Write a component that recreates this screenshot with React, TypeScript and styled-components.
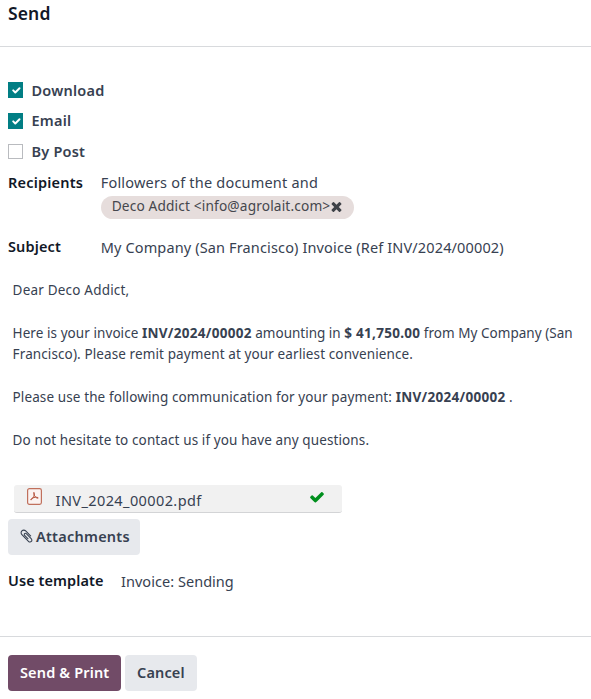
import React from 'react';
import styled, { createGlobalStyle } from 'styled-components';

const GlobalStyle = createGlobalStyle`
  *, *::before, *::after { box-sizing: border-box; }
  body {
    margin: 0;
    background: #fff;
    color: #374151;
    font-family: "Noto Sans", "Open Sans", sans-serif;
    font-size: 14.5px;
    line-height: 28px;
  }
`;

const Dialog = styled.main`
  display: flex;
  flex-direction: column;
  width: 591px;
  height: 699px;
  overflow: hidden;
`;

const Header = styled.header`
  height: 47px;
  padding: 0 8px;
  border-bottom: 1px solid #d8dadd;
`;

const Title = styled.h1`
  margin: 0;
  color: #111827;
  font-size: 17.5px;
  font-weight: 570;
  line-height: 27px;
  letter-spacing: 0.12px;
`;

const Content = styled.section`
  display: flex;
  flex-direction: column;
  height: 589px;
  padding: 27px 8px 0;
`;

const Option = styled.label`
  display: flex;
  align-items: center;
  gap: 8.5px;
  height: 31px;
`;

const OptionText = styled.span<{ $rise: number }>`
  padding-bottom: ${p => p.$rise * 2}px;
  font-weight: 570;
  letter-spacing: 0.22px;
`;

const Box = styled.span<{ $checked: boolean }>`
  display: flex;
  align-items: center;
  justify-content: center;
  width: 15px;
  height: ${p => (p.$checked ? 16 : 15)}px;
  background: ${p => (p.$checked ? '#017e84' : '#fff')};
  border: 1px solid ${p => (p.$checked ? '#017e84' : '#b9bbbf')};
`;

const Field = styled.div<{ $labelWidth: number; $top: number }>`
  display: grid;
  grid-template-columns: ${p => p.$labelWidth}px 1fr;
  margin-top: ${p => p.$top}px;
`;

const FieldLabel = styled.span<{ $spacing: number }>`
  color: #111827;
  font-weight: 600;
  letter-spacing: ${p => p.$spacing}px;
`;

const FieldValue = styled.div<{ $spacing: number; $drop?: number }>`
  height: 28px;
  padding-top: ${p => p.$drop ?? 0}px;
  white-space: nowrap;
  letter-spacing: ${p => p.$spacing}px;
`;

const Chip = styled.span`
  display: flex;
  align-items: center;
  width: 253px;
  height: 23px;
  padding: 0 11px;
  border-radius: 12px;
  background: #e6dddc;
  color: #45474d;
  font-size: 13.7px;
  letter-spacing: 0.15px;
  white-space: nowrap;
`;

const ChipText = styled.span`
  width: 217px;
  height: 23px;
  line-height: 20px;
`;

const Message = styled.div`
  margin: 19.5px 5px 0 4.6px;
  font-size: 13.5px;
  line-height: 21.5px;
  letter-spacing: 0.11px;
  white-space: nowrap;
`;

const Paragraph = styled.p`
  margin: 0 0 21.5px;
`;

const Words = styled.span<{ $spacing: number }>`
  letter-spacing: ${p => p.$spacing}px;
`;

const Strong = styled.strong`
  font-weight: 700;
  letter-spacing: 0.29px;
`;

const FileRow = styled.div`
  display: flex;
  align-items: center;
  width: 328px;
  height: 28px;
  margin: 12px 0 6px 6px;
  padding: 0 17px 0 13px;
  border-bottom: 1px solid #d3d4d6;
  border-radius: 3px;
  background: #f1f1f1;
`;

const FileName = styled.span`
  flex: 1;
  height: 26px;
  margin-left: 13.6px;
  letter-spacing: 0.4px;
`;

const Button = styled.button<{ $primary?: boolean; $width: number; $spacing: number }>`
  display: flex;
  align-items: center;
  flex: none;
  gap: 3px;
  width: ${p => p.$width}px;
  height: 36px;
  padding: 0 0 2px 12px;
  border: 0;
  border-radius: 4px;
  background: ${p => (p.$primary ? '#714b67' : '#e7e9ed')};
  color: ${p => (p.$primary ? '#fff' : '#374151')};
  font: 570 14.5px/34px "Noto Sans", "Open Sans", sans-serif;
  letter-spacing: ${p => p.$spacing}px;
  white-space: nowrap;
`;

const Footer = styled.footer`
  display: flex;
  gap: 4px;
  padding: 18px 8px 0;
  border-top: 1px solid #d8dadd;
`;

const Icon = styled.svg<{ $lift?: number }>`
  flex: none;
  margin-bottom: ${p => p.$lift ?? 0}px;
`;

const CHECK =
  'M1671 566q0 40-28 68l-724 724-136 136q-28 28-68 28t-68-28l-136-136-362-362q-28-28-28-68t28-68l136-136q28-28 68-28t68 28l294 295 656-657q28-28 68-28t68 28l136 136q28 28 28 68z';
const CROSS =
  'M1490 1322q0 40-28 68l-136 136q-28 28-68 28t-68-28l-294-294-294 294q-28 28-68 28t-68-28l-136-136q-28-28-28-68t28-68l294-294-294-294q-28-28-28-68t28-68l136-136q28-28 68-28t68 28l294 294 294-294q28-28 68-28t68 28l136 136q28 28 28 68t-28 68l-294 294 294 294q28 28 28 68z';
const CLIP =
  'M1596 1385q0 117-79 196t-196 79q-135 0-235-100l-777-776q-113-115-113-271 0-159 110-270t269-111q158 0 273 113l605 606q10 10 10 22 0 16-30.5 46.5t-46.5 30.5q-13 0-23-10l-606-607q-79-77-181-77-106 0-179 75t-73 181q0 105 76 181l776 777q63 63 145 63 64 0 106-42t42-106q0-82-63-145l-581-581q-26-24-60-24-29 0-48 19t-19 48q0 32 25 59l410 410q10 10 10 22 0 16-31 47t-47 31q-12 0-22-10l-410-410q-63-61-63-149 0-82 57-139t139-57q88 0 149 63l581 581q100 98 100 235z';

const OPTIONS = [
  { label: 'Download', checked: true, rise: 0 },
  { label: 'Email', checked: true, rise: 1 },
  { label: 'By Post', checked: false, rise: 1 },
];

const PdfIcon = () => (
  <Icon width="15" height="17" viewBox="0 0 15 17" fill="none" stroke="#c0705c" $lift={4}>
    <rect x=".6" y=".6" width="13.8" height="15.8" rx="1.8" fill="#fbf3f1" strokeWidth="1.2" />
    <path
      d="M6.9 4.4C7.8 6 7.1 8 6 9.8C5.3 11 4.4 12 3.8 11.8C3.5 11 5 10 7 9.5C9 9 11.3 9.2 11.2 10.1C10.5 10.7 8.6 9.5 7.6 7.8C6.9 6.5 6.6 5 6.9 4.4Z"
      stroke="#b4513a"
      strokeWidth="1"
    />
  </Icon>
);

export default function App() {
  return (
    <>
      <GlobalStyle />
      <Dialog>
        <Header>
          <Title>Send</Title>
        </Header>
        <Content>
          {OPTIONS.map(o => (
            <Option key={o.label}>
              <Box $checked={o.checked}>
                {o.checked && (
                  <Icon width="14" height="14" viewBox="0 0 20 20" fill="none" stroke="#fff" strokeWidth="2.8" strokeLinecap="round" strokeLinejoin="round">
                    <path d="M6 10.5l3 3 6-6" />
                  </Icon>
                )}
              </Box>
              <OptionText $rise={o.rise}>{o.label}</OptionText>
            </Option>
          ))}

          <Field $labelWidth={92.7} $top={1}>
            <FieldLabel $spacing={0.2}>Recipients</FieldLabel>
            <div>
              <FieldValue $spacing={0.2}>Followers of the document and</FieldValue>
              <Chip>
                <ChipText>Deco Addict &lt;info@agrolait.com&gt;</ChipText>
                <Icon width="15" height="15" viewBox="0 0 1792 1792" fill="#3f4248" $lift={3}>
                  <path d={CROSS} />
                </Icon>
              </Chip>
            </div>
          </Field>

          <Field $labelWidth={92.7} $top={13}>
            <FieldLabel $spacing={0.13}>Subject</FieldLabel>
            <FieldValue $spacing={0.14} $drop={1}>
              My Company (San Francisco) Invoice (Ref INV/2024/00002)
            </FieldValue>
          </Field>

          <Message>
            <Paragraph>
              <Words $spacing={0.2}>Dear Deco Addict,</Words>
            </Paragraph>
            <Paragraph>
              <Words $spacing={0.07}>Here is your invoice </Words>
              <Strong>INV/2024/00002</Strong>
              <Words $spacing={0}> amounting in </Words>
              <Strong>$ 41,750.00</Strong>
              <Words $spacing={0.03}> from My Company (San</Words>
              <br />
              Francisco). Please remit payment at your earliest convenience.
            </Paragraph>
            <Paragraph>
              Please use the following communication for your payment: <Strong>INV/2024/00002</Strong> .
            </Paragraph>
            <Paragraph>Do not hesitate to contact us if you have any questions.</Paragraph>
          </Message>

          <FileRow>
            <PdfIcon />
            <FileName>INV_2024_00002.pdf</FileName>
            <Icon width="16" height="16" viewBox="0 0 1792 1792" fill="#008f1d" $lift={3}>
              <path d={CHECK} />
            </Icon>
          </FileRow>

          <Button $width={132} $spacing={0.24}>
            <Icon width="13" height="14" viewBox="130 80 1536 1620" fill="#374151">
              <path d={CLIP} />
            </Icon>
            Attachments
          </Button>

          <Field $labelWidth={113} $top={11}>
            <FieldLabel $spacing={0.08}>Use template</FieldLabel>
            <FieldValue $spacing={0.04} $drop={1}>Invoice: Sending</FieldValue>
          </Field>
        </Content>
        <Footer>
          <Button $primary $width={113} $spacing={0.15}>Send &amp; Print</Button>
          <Button $width={72} $spacing={0.15}>Cancel</Button>
        </Footer>
      </Dialog>
    </>
  );
}
